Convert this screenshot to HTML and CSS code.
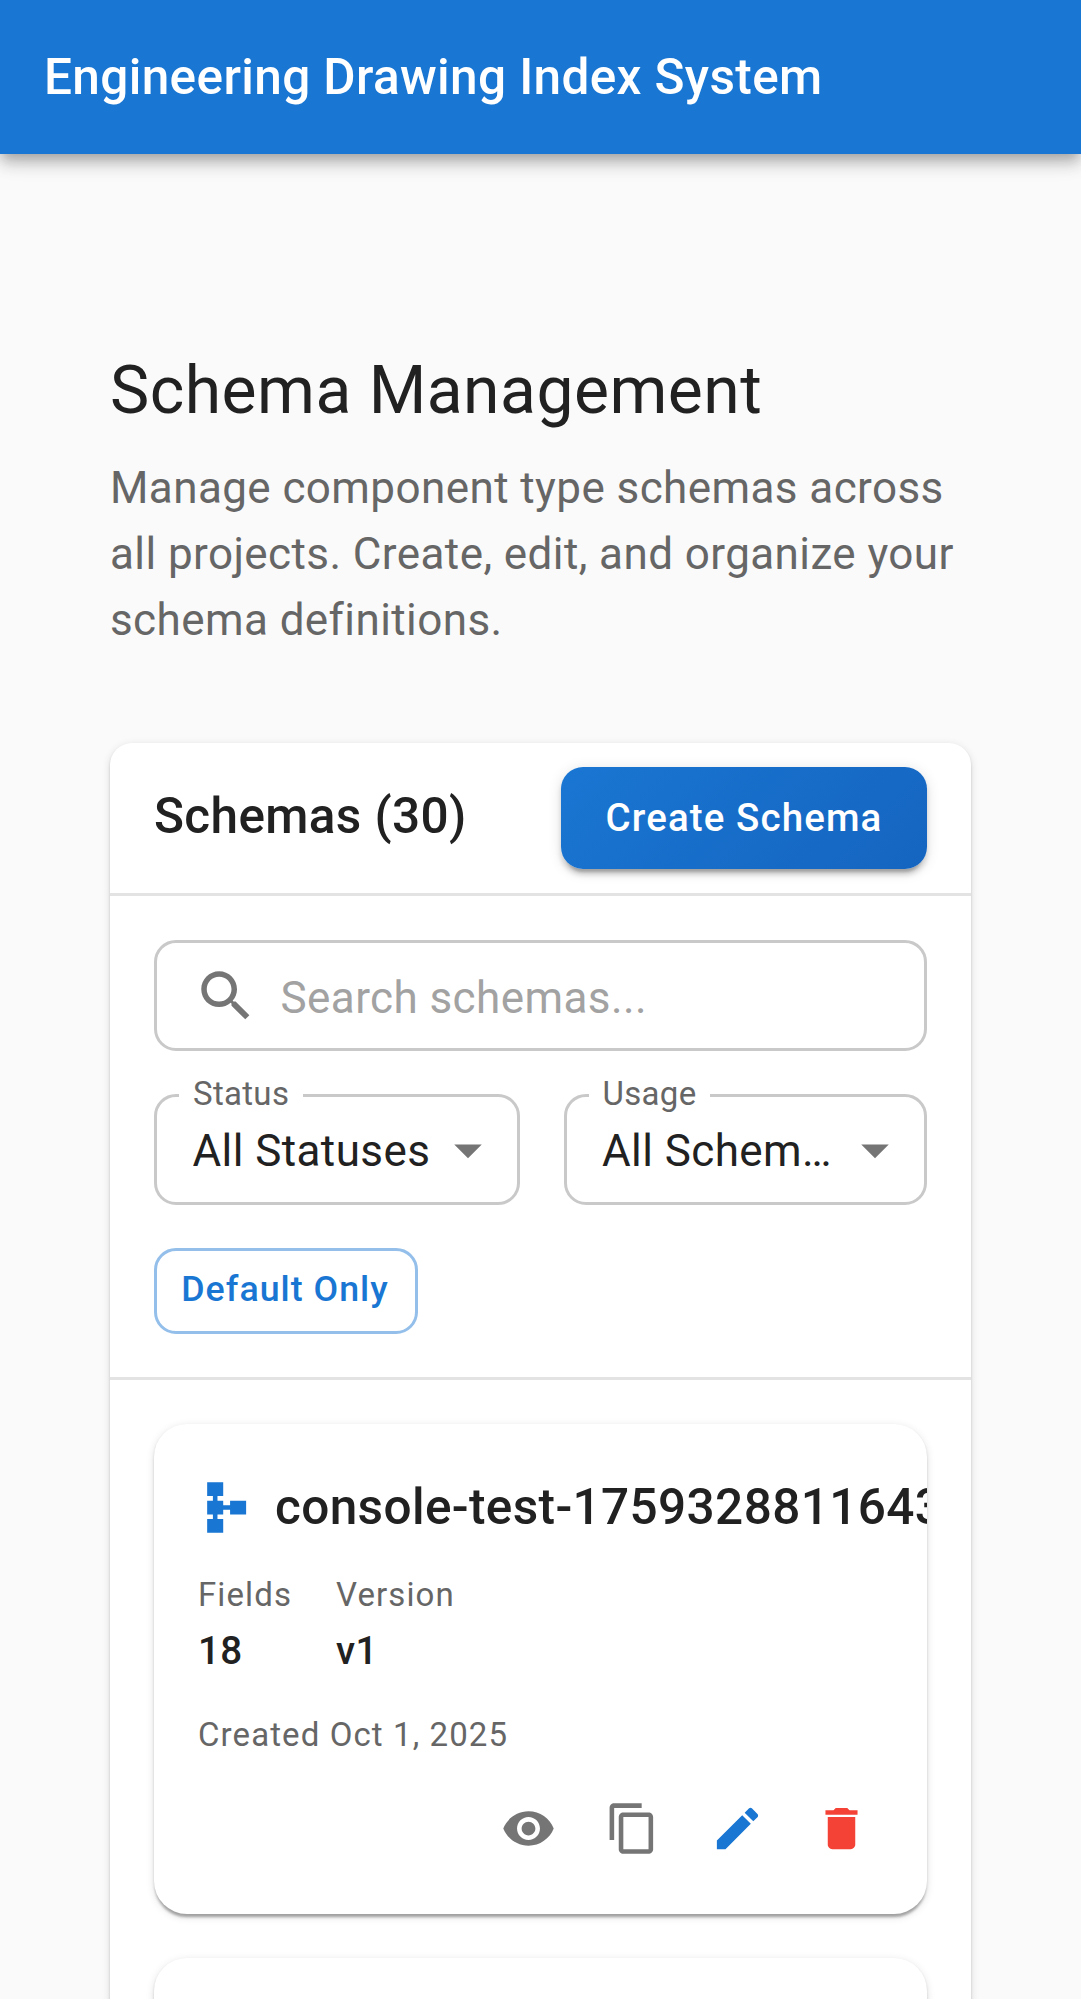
FILE: index.html
```html
<!DOCTYPE html>
<html lang="en">
<head>
  <meta charset="utf-8">
  <title>Schema Management</title>
  <link rel="stylesheet" href="styles.css">
</head>
<body>
  <header class="app-bar">
    <div class="app-bar-title">Engineering Drawing Index System</div>
  </header>

  <main class="page">
    <h1 class="page-title">Schema Management</h1>
    <p class="page-intro">Manage component type schemas across all projects. Create, edit, and organize your schema definitions.</p>

    <section class="panel">
      <div class="panel-header">
        <h2 class="panel-title">Schemas (30)</h2>
        <button class="create-button" type="button">Create Schema</button>
      </div>

      <div class="filters">
        <div class="search">
          <svg class="icon-large" viewBox="0 0 24 24"><path d="M15.5 14h-.79l-.28-.27C15.41 12.59 16 11.11 16 9.5 16 5.91 13.09 3 9.5 3S3 5.91 3 9.5 5.91 16 9.5 16c1.61 0 3.09-.59 4.23-1.57l.27.28v.79l5 4.99L20.49 19l-4.99-5zm-6 0C7.01 14 5 11.99 5 9.5S7.01 5 9.5 5 14 7.01 14 9.5 11.99 14 9.5 14z"/></svg>
          <span class="search-placeholder">Search schemas...</span>
        </div>
        <div class="select-row">
          <div class="select">
            <span class="select-label">Status</span>
            <span class="select-value">All Statuses</span>
            <svg class="icon-large" viewBox="0 0 24 24"><path d="M7 10l5 5 5-5z"/></svg>
          </div>
          <div class="select">
            <span class="select-label">Usage</span>
            <span class="select-value">All Schemas</span>
            <svg class="icon-large" viewBox="0 0 24 24"><path d="M7 10l5 5 5-5z"/></svg>
          </div>
        </div>
        <button class="default-button" type="button">Default Only</button>
      </div>

      <div class="schema-list">
        <article class="schema-card">
          <div class="schema-heading">
            <svg class="icon schema-icon" viewBox="0 0 24 24"><path d="M14 9v2h-3V9H8.5V7H11V1H4v6h2.5v2H4v6h2.5v2H4v6h7v-6H8.5v-2H11v-2h3v2h7V9z"/></svg>
            <h3 class="schema-name">console-test-1759328811643</h3>
          </div>
          <dl class="stats">
            <div class="stat"><dt class="stat-label">Fields</dt><dd class="stat-value">18</dd></div>
            <div class="stat"><dt class="stat-label">Version</dt><dd class="stat-value">v1</dd></div>
          </dl>
          <p class="created">Created Oct 1, 2025</p>
          <div class="actions">
            <button class="action" type="button" aria-label="View"><svg class="icon" viewBox="0 0 24 24"><path d="M12 4.5C7 4.5 2.73 7.61 1 12c1.73 4.39 6 7.5 11 7.5s9.27-3.11 11-7.5c-1.73-4.39-6-7.5-11-7.5zM12 17c-2.76 0-5-2.24-5-5s2.24-5 5-5 5 2.24 5 5-2.24 5-5 5zm0-8c-1.66 0-3 1.34-3 3s1.34 3 3 3 3-1.34 3-3-1.34-3-3-3z"/></svg></button>
            <button class="action" type="button" aria-label="Copy"><svg class="icon" viewBox="0 0 24 24"><path d="M16 1H4c-1.1 0-2 .9-2 2v14h2V3h12V1zm3 4H8c-1.1 0-2 .9-2 2v14c0 1.1.9 2 2 2h11c1.1 0 2-.9 2-2V7c0-1.1-.9-2-2-2zm0 16H8V7h11v14z"/></svg></button>
            <button class="action action-edit" type="button" aria-label="Edit"><svg class="icon" viewBox="0 0 24 24"><path d="M3 17.25V21h3.75L17.81 9.94l-3.75-3.75L3 17.25zM20.71 7.04c.39-.39.39-1.02 0-1.41l-2.34-2.34c-.39-.39-1.02-.39-1.41 0l-1.83 1.83 3.75 3.75 1.83-1.83z"/></svg></button>
            <button class="action action-delete" type="button" aria-label="Delete"><svg class="icon" viewBox="0 0 24 24"><path d="M6 19c0 1.1.9 2 2 2h8c1.1 0 2-.9 2-2V7H6v12zM19 4h-3.5l-1-1h-5l-1 1H5v2h14V4z"/></svg></button>
          </div>
        </article>
        <article class="schema-card"></article>
      </div>
    </section>
  </main>
</body>
</html>
```
FILE: styles.css
```css
* {
  box-sizing: border-box;
}

body {
  display: flex;
  flex-direction: column;
  height: 100vh;
  margin: 0;
  overflow: hidden;
  background: #fafafa;
  color: #212121;
  font-family: Roboto, "Liberation Sans", sans-serif;
}

h1, h2, h3, p, dl, dd {
  margin: 0;
}

button {
  padding: 0;
  border: 0;
  background: none;
  font-family: inherit;
}

svg {
  display: block;
  flex: none;
  fill: currentColor;
}

.icon {
  width: 55px;
  height: 55px;
}

.icon-large {
  width: 66px;
  height: 66px;
  color: #757575;
}

.app-bar {
  z-index: 1;
  display: flex;
  flex: none;
  align-items: center;
  height: 154px;
  padding: 0 44px;
  background: #1976d2;
  color: #fff;
  box-shadow: 0 5.5px 11px -2.75px rgba(0, 0, 0, .2), 0 11px 13.75px 0 rgba(0, 0, 0, .14), 0 2.75px 27.5px 0 rgba(0, 0, 0, .12);
}

.app-bar-title {
  font-size: 49.5px;
  font-weight: 500;
  letter-spacing: .0075em;
}

.page {
  flex: 1;
  min-height: 0;
  padding: 197px 110px 0;
  overflow: hidden;
}

.page-title {
  margin-bottom: 24px;
  font-size: 66px;
  font-weight: 400;
  line-height: 80px;
  letter-spacing: .00735em;
}

.page-intro {
  margin-bottom: 90px;
  color: #666;
  font-size: 44px;
  line-height: 66px;
  letter-spacing: .00938em;
}

.panel {
  border-radius: 22px;
  background: #fff;
  box-shadow: 0 5.5px 2.75px -2.75px rgba(0, 0, 0, .2), 0 2.75px 2.75px 0 rgba(0, 0, 0, .14), 0 2.75px 8.25px 0 rgba(0, 0, 0, .12);
}

.panel-header {
  display: flex;
  justify-content: space-between;
  height: 153px;
  padding: 24px 44px 0;
  border-bottom: 3px solid #e3e3e3;
}

.panel-title {
  font-size: 49.5px;
  font-weight: 500;
  line-height: 98px;
  letter-spacing: .0075em;
}

.create-button {
  width: 366px;
  height: 102px;
  padding-bottom: 2px;
  border-radius: 22px;
  background: linear-gradient(135deg, #1976d2 0%, #1565c0 100%);
  color: #fff;
  font-size: 38.5px;
  font-weight: 500;
  letter-spacing: .02857em;
  box-shadow: 0 8.25px 2.75px -5.5px rgba(0, 0, 0, .2), 0 5.5px 5.5px 0 rgba(0, 0, 0, .14), 0 2.75px 13.75px 0 rgba(0, 0, 0, .12);
}

.filters {
  display: flex;
  flex-direction: column;
  align-items: stretch;
  padding: 44px 44px 43px;
  border-bottom: 3px solid #e3e3e3;
}

.search {
  display: flex;
  align-items: center;
  gap: 22px;
  height: 111px;
  margin-bottom: 43px;
  padding-left: 35.5px;
  border: 3px solid #c9c9c9;
  border-radius: 22px;
}

.search-placeholder {
  padding-top: 4px;
  color: #a2a2a2;
  font-size: 44px;
  letter-spacing: .00938em;
}

.select-row {
  display: grid;
  grid-template-columns: 366px 1fr;
  gap: 43.5px;
  margin-bottom: 43px;
}

.select {
  position: relative;
  display: flex;
  align-items: center;
  justify-content: space-between;
  height: 111px;
  padding: 0 16px 0 35.5px;
  border: 3px solid #c9c9c9;
  border-radius: 22px;
}

/* The label sits over the outline and interrupts it. */
.select-label {
  position: absolute;
  top: -23px;
  left: 22px;
  padding: 0 14px;
  background: #fff;
  color: #666;
  font-size: 33px;
  line-height: 40px;
  letter-spacing: .00938em;
}

.select-value {
  width: 239px;
  padding-top: 3px;
  overflow: hidden;
  font-size: 44px;
  line-height: 64px;
  letter-spacing: .00938em;
  text-overflow: ellipsis;
  white-space: nowrap;
}

.default-button {
  width: 264px;
  height: 86px;
  padding: 0 2px 4px 0;
  border: 3px solid #94bfea;
  border-radius: 22px;
  color: #1976d2;
  font-size: 35.75px;
  font-weight: 500;
  letter-spacing: .02857em;
}

.schema-list {
  display: flex;
  flex-direction: column;
  gap: 44px;
  padding: 44px;
}

.schema-card {
  flex: none;
  height: 490px;
  padding: 44px;
  overflow: hidden;
  border-radius: 33px;
  background: #fff;
  box-shadow: 0 5.5px 2.75px -2.75px rgba(0, 0, 0, .2), 0 2.75px 2.75px 0 rgba(0, 0, 0, .14), 0 2.75px 8.25px 0 rgba(0, 0, 0, .12);
}

.schema-heading {
  display: flex;
  align-items: center;
  gap: 22px;
  height: 78px;
  margin-bottom: 21px;
}

.schema-icon {
  color: #1976d2;
}

.schema-name {
  font-size: 49.5px;
  font-weight: 500;
  letter-spacing: .0075em;
  white-space: nowrap;
}

.stats {
  display: flex;
  gap: 44px;
  margin-bottom: 27px;
}

.stat-label,
.created {
  color: #666;
  font-size: 33px;
  line-height: 55px;
  letter-spacing: .03333em;
}

.stat-value {
  font-size: 38.5px;
  font-weight: 500;
  line-height: 58px;
  letter-spacing: .01071em;
}

.created {
  margin-bottom: 17px;
}

.actions {
  display: flex;
  justify-content: flex-end;
  gap: 5.5px;
  margin-right: -8px;
}

.action {
  display: flex;
  align-items: center;
  justify-content: center;
  width: 99px;
  height: 99px;
  color: #757575;
}

.action-edit {
  color: #1976d2;
}

.action-delete {
  color: #f44336;
}
```
